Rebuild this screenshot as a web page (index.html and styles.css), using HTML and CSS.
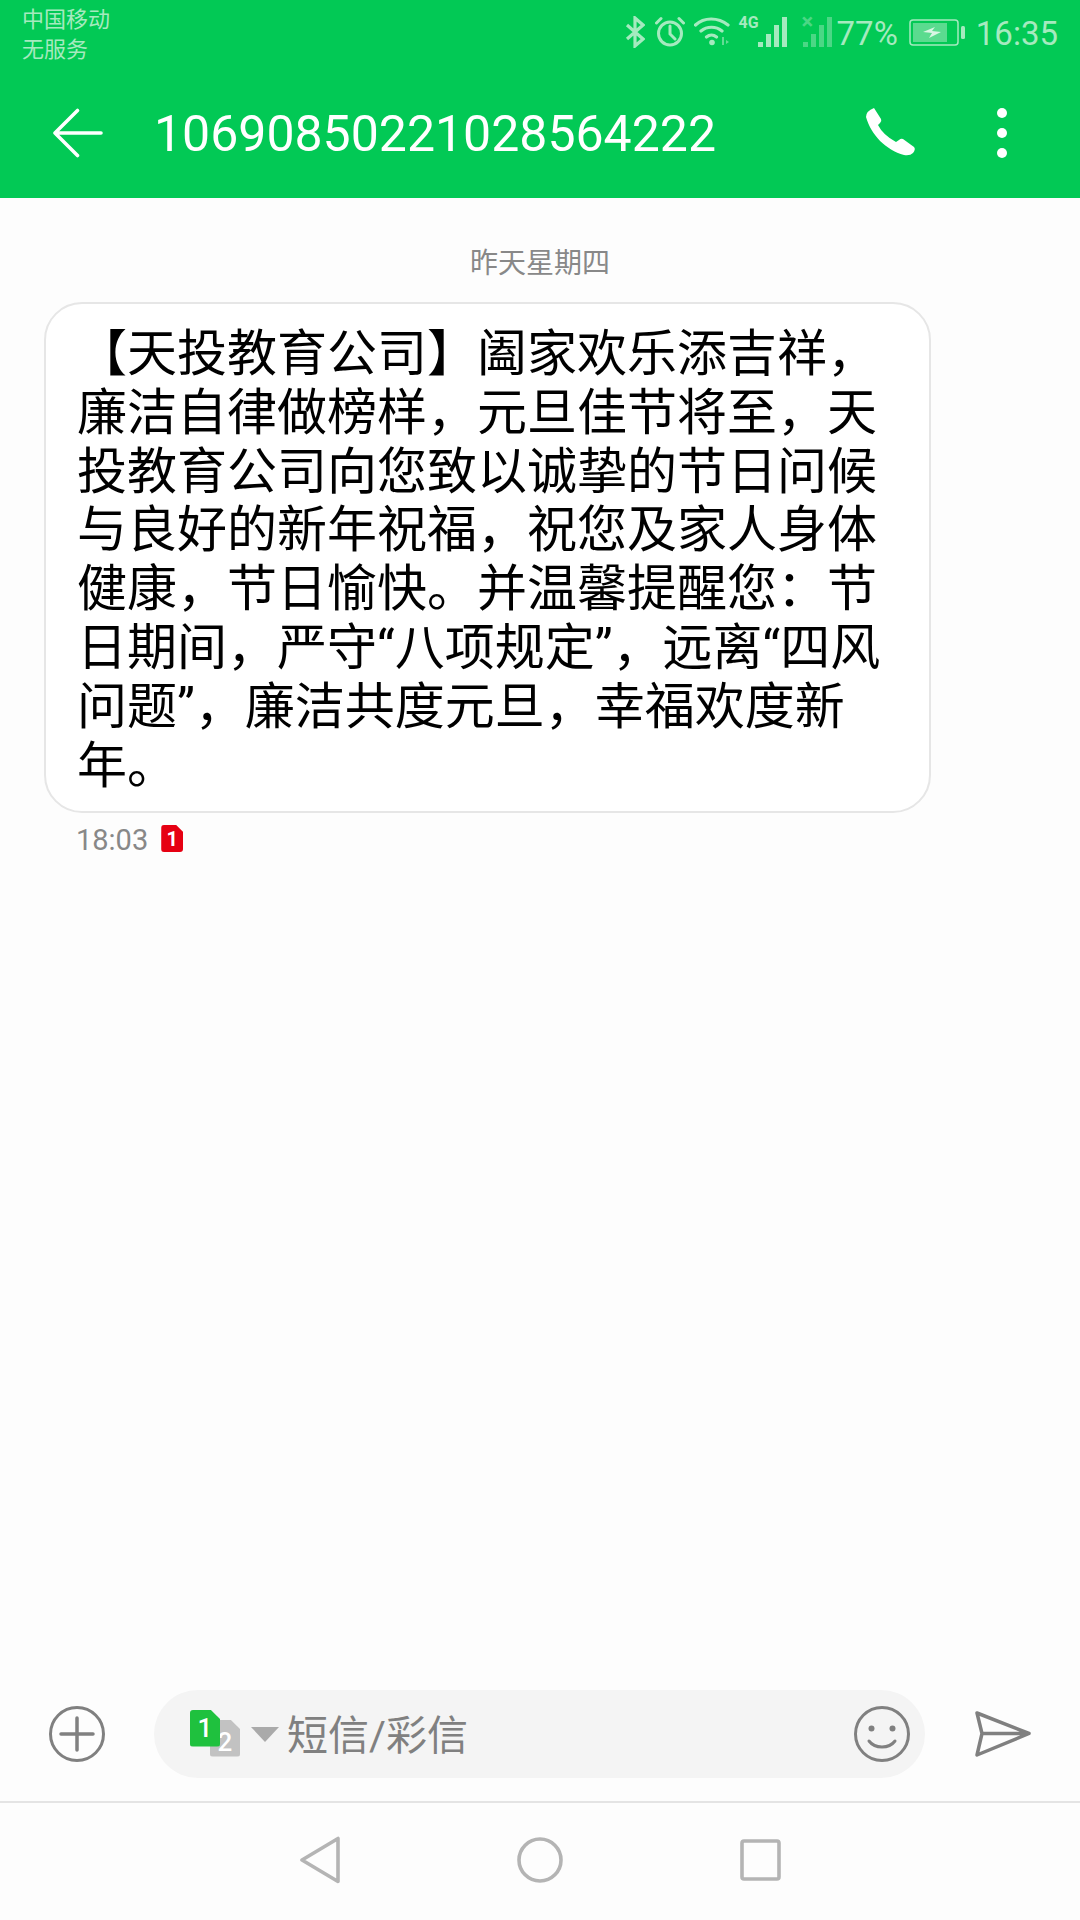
FILE: index.html
```html
<!DOCTYPE html>
<html lang="zh-CN">
<head>
  <meta charset="utf-8">
  <title>1069085 0221028564222</title>
  <link rel="stylesheet" href="styles.css">
</head>
<body>
  <div class="screen">
    <header class="topbar">
      <div class="status">
        <div class="carrier">中国移动<br>无服务</div>
        <div class="status-right">
          <svg class="ic-bt" width="20" height="32" viewBox="0 0 20 32"><path d="M2 9l16 14-8 7V2l8 7L2 23" fill="none" stroke="#a5eabf" stroke-width="3.200"/></svg>
          <svg class="ic-alarm" width="30" height="31" viewBox="0 0 30 31"><g fill="none" stroke="#a5eabf" stroke-width="3" stroke-linecap="round"><circle cx="15" cy="17.5" r="11.5"/><path d="M15 10v8l5 5M1.5 7L6 2.5M28.500 7L24 2.5"/></g></svg>
          <svg class="ic-wifi" width="36" height="30" viewBox="0 0 36 30"><g fill="none" stroke="#a5eabf" stroke-width="3.200" stroke-linecap="round"><path d="M1.500 9C10 1 24 1 34 9M7 15c6-5 15-5 21 0M12.500 21c3-2.500 7-2.500 10 0"/></g><circle cx="18" cy="26.500" r="2.800" fill="#a5eabf"/><path d="M28 21h2v8h-2zM32 24l3 2-3 2z" fill="#a5eabf" opacity=".6"/></svg>
          <div class="net">
            <span class="net-4g">4G</span>
            <div class="bars"><i class="b1"></i><i class="b2"></i><i class="b3"></i><i class="b4"></i></div>
          </div>
          <div class="net net-off">
            <span class="net-x">×</span>
            <div class="bars"><i class="b1"></i><i class="b2"></i><i class="b3"></i><i class="b4"></i></div>
          </div>
          <span class="pct">77%</span>
          <svg class="ic-batt" width="56" height="27" viewBox="0 0 56 27"><rect x="1" y="1" width="48" height="25" rx="3" fill="none" stroke="#a5eabf" stroke-width="1.500"/><rect x="4" y="4" width="34" height="19" fill="#a5eabf" opacity=".55"/><path d="M14 13l12-5-3 4 9 1-12 6 3-5z" fill="#d9f6e4"/><rect x="52" y="7" width="4" height="13" rx="1.500" fill="#a5eabf"/></svg>
          <span class="clock">16:35</span>
        </div>
      </div>
      <div class="toolbar">
        <svg class="back" width="51" height="50" viewBox="0 0 52 50"><path d="M50 25H3M26 2L3 25l23 23" fill="none" stroke="#fff" stroke-width="3.600" stroke-linecap="round" stroke-linejoin="round"/></svg>
        <h1 class="title">10690850221028564222</h1>
        <svg class="phone" width="50" height="50" viewBox="0 0 50 50"><path d="M8 1L15 12Q16 14 14 16L12 18Q17 28 30 35L33 33Q35 31 37 32L48 40Q50 42 47 46Q44 49 38 48C20 43 5 28 0 10Q0 4 8 1Z" fill="#fff"/></svg>
        <div class="more"><i></i><i></i><i></i></div>
      </div>
    </header>

    <main class="thread">
      <div class="date">昨天星期四</div>
      <div class="bubble">【天投教育公司】阖家欢乐添吉祥，<br>廉洁自律做榜样，元旦佳节将至，天<br>投教育公司向您致以诚挚的节日问候<br>与良好的新年祝福，祝您及家人身体<br>健康，节日愉快。并温馨提醒您：节<br>日期间，严守“八项规定”，远离“四风<br>问题”，廉洁共度元旦，幸福欢度新<br>年。</div>
      <div class="meta">
        <span>18:03</span>
        <div class="sim sim-red">1</div>
      </div>
    </main>

    <div class="composer">
      <svg class="add" width="56" height="56" viewBox="0 0 56 56"><circle cx="28" cy="28" r="26.500" fill="none" stroke="#808080" stroke-width="3"/><path d="M28 12v32M12 28h32" stroke="#808080" stroke-width="3.500" stroke-linecap="round"/></svg>
      <div class="input">
        <div class="sims">
          <div class="sim sim-grey">2</div>
          <div class="sim sim-green">1</div>
        </div>
        <div class="caret"></div>
        <span class="placeholder">短信/彩信</span>
        <svg class="smile" width="56" height="56" viewBox="0 0 56 56"><circle cx="28" cy="28" r="26.500" fill="none" stroke="#808080" stroke-width="3"/><circle cx="17.500" cy="22.500" r="3" fill="#808080"/><circle cx="38.500" cy="22.500" r="3" fill="#808080"/><path d="M15 35c6 8 20 8 26 0" fill="none" stroke="#808080" stroke-width="3" stroke-linecap="round"/></svg>
      </div>
      <svg class="send" width="56" height="46" viewBox="0 0 56 46"><path d="M2 2L54 22.500 2 44 7 22.500zM7 22.500H54" fill="none" stroke="#808080" stroke-width="3.500" stroke-linejoin="round"/></svg>
    </div>

    <nav class="navbar">
      <svg width="40" height="48" viewBox="0 0 40 48"><path d="M38 2.500V45.500L2 24z" fill="none" stroke="#b4b4b4" stroke-width="3.600" stroke-linejoin="round"/></svg>
      <svg width="46" height="46" viewBox="0 0 46 46"><circle cx="23" cy="23" r="21" fill="none" stroke="#b4b4b4" stroke-width="3.600"/></svg>
      <svg width="41" height="42" viewBox="0 0 41 42"><rect x="2" y="2" width="37" height="38" rx="2" fill="none" stroke="#b4b4b4" stroke-width="3.600"/></svg>
    </nav>
  </div>
</body>
</html>
```

FILE: styles.css
```css
html, body {
  margin: 0;
  height: 100%;
}
body {
  font-family: Roboto, "Noto Sans CJK SC", sans-serif;
  background: #fdfdfd;
}
.screen {
  width: 1080px;
  height: 1920px;
  display: flex;
  flex-direction: column;
  overflow: hidden;
}

/* green header */
.topbar {
  height: 198px;
  background: #02c955;
  flex: none;
}
.status {
  height: 68px;
  padding: 5px 22px 0 22px;
  display: flex;
  justify-content: space-between;
  box-sizing: border-box;
}
.carrier {
  font-size: 22px;
  line-height: 30px;
  color: #a5eabf;
}
.status-right {
  display: flex;
  align-items: flex-start;
  padding-top: 11px;
  color: #a5eabf;
}
.ic-alarm { margin-left: 10px; }
.ic-wifi { margin-left: 9px; }
.net {
  position: relative;
  width: 48px;
  height: 31px;
  margin-left: 9px;
}
.net-off {
  width: 32px;
  margin-left: 13px;
  opacity: .45;
}
.net-4g {
  position: absolute;
  left: 0;
  top: -3px;
  font-size: 16px;
  font-weight: 700;
}
.net-x {
  position: absolute;
  left: 2px;
  top: -7px;
  font-size: 22px;
  font-weight: 700;
}
.bars {
  position: absolute;
  right: 0;
  bottom: 0;
  display: flex;
  align-items: flex-end;
  gap: 3px;
}
.bars i {
  display: block;
  width: 5px;
  background: #a5eabf;
}
.bars .b1 { height: 5px; }
.bars .b2 { height: 13px; }
.bars .b3 { height: 22px; }
.bars .b4 { height: 30px; }
.pct {
  font-size: 33px;
  line-height: 36px;
  margin-left: 5px;
}
.ic-batt { margin-left: 11px; margin-top: 3px; }
.clock {
  font-size: 33px;
  line-height: 36px;
  margin-left: 11px;
}
.toolbar {
  height: 130px;
  display: flex;
  align-items: center;
  padding-left: 52px;
}
.back { flex: none; }
.title {
  margin: 2px 0 0 51px;
  font-size: 50px;
  font-weight: 400;
  color: #fff;
  flex: 1;
}
.phone { margin: 0 81px 3px 0; }
.more {
  display: flex;
  flex-direction: column;
  gap: 10px;
  margin-right: 73px;
}
.more i {
  display: block;
  width: 10px;
  height: 10px;
  border-radius: 50%;
  background: #fff;
}

/* messages */
.thread {
  flex: 1;
  padding: 48px 0 0 44px;
}
.date {
  width: 992px;
  text-align: center;
  font-size: 28px;
  line-height: 36px;
  color: #888;
}
.bubble {
  width: 887px;
  box-sizing: border-box;
  margin-top: 20px;
  padding: 21px 0 16px 31px;
  background: #fff;
  border: 2px solid #e6e6e6;
  border-radius: 38px;
  font-size: 50px;
  line-height: 58.800px;
  color: #000;
  white-space: nowrap;
}
.meta {
  display: flex;
  align-items: center;
  gap: 13px;
  margin: 10px 0 0 32px;
  font-size: 29px;
  line-height: 34px;
  color: #888;
}
.sim {
  width: 22px;
  height: 27px;
  border-radius: 3px;
  clip-path: polygon(0 0, 68% 0, 100% 26%, 100% 100%, 0 100%);
  color: #fff;
  font-size: 20px;
  font-weight: 700;
  line-height: 28px;
  text-align: center;
}
.sim-red { background: #e60012; margin-top: -4px; }

/* input row */
.composer {
  height: 111px;
  box-sizing: border-box;
  flex: none;
  display: flex;
  align-items: flex-start;
  padding: 0 0 0 49px;
}
.add { margin-top: 16px; }
.input {
  width: 771px;
  height: 88px;
  margin-left: 49px;
  border-radius: 44px;
  background: #f4f4f4;
  display: flex;
  align-items: center;
}
.sims {
  position: relative;
  width: 50px;
  height: 47px;
  margin: -2px 0 0 36px;
  flex: none;
}
.sims .sim {
  position: absolute;
  width: 30px;
  height: 37px;
  font-size: 26px;
  font-weight: 500;
  line-height: 36px;
}
.sim-green { left: 0; top: 0; background: #1fc13e; }
.sim-grey { left: 20px; top: 10px; background: #c2c2c2; }
.sims .sim-grey { line-height: 44px; }
.caret {
  width: 0;
  height: 0;
  margin-left: 11px;
  border-left: 14px solid transparent;
  border-right: 14px solid transparent;
  border-top: 15px solid #aaa;
}
.placeholder {
  margin: -4px 0 0 8px;
  font-size: 41px;
  color: #808080;
  flex: 1;
}
.smile { margin-right: 15px; }
.send { margin: 21px 0 0 50px; }

/* bottom navigation */
.navbar {
  height: 119px;
  box-sizing: border-box;
  flex: none;
  border-top: 2px solid #e4e4e4;
  display: flex;
  align-items: center;
  padding: 0 0 3px 300px;
  gap: 177px;
}
```
